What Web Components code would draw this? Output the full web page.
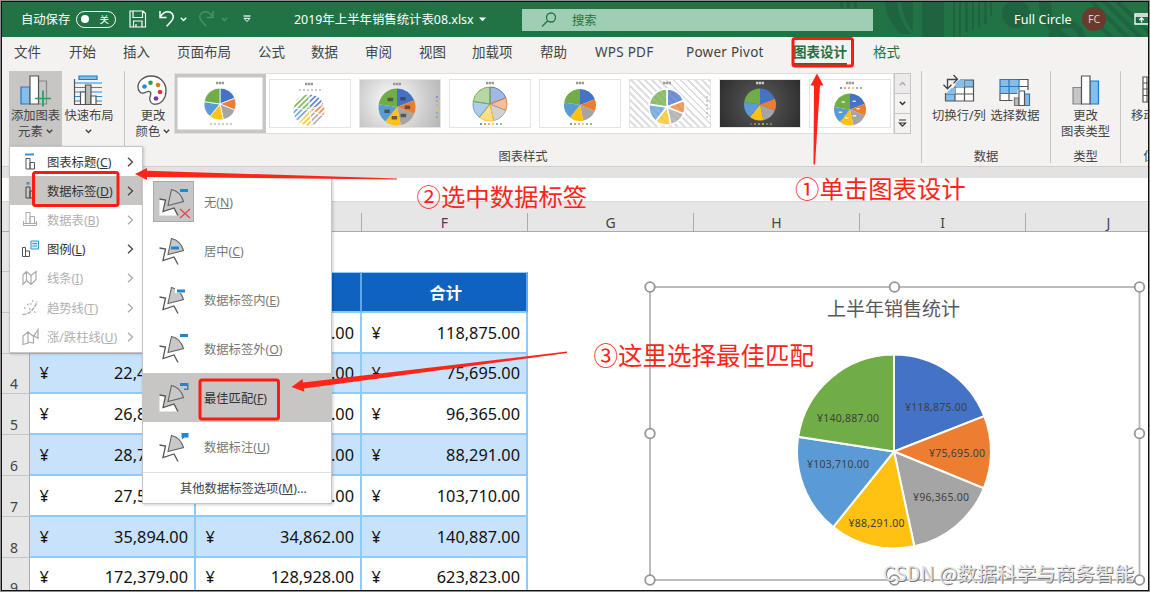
<!DOCTYPE html>
<html lang="zh-CN">
<head>
<meta charset="utf-8">
<title>2019年上半年销售统计表08.xlsx</title>
<style>
    html, body { margin: 0; padding: 0; }
    body {
        width: 1150px; height: 592px; overflow: hidden; background: #8e8e8e;
        font-family: "Noto Sans", "Noto Sans CJK SC", sans-serif;
        color: #444;
    }
</style>
</head>
<body>
<excel-app></excel-app>

<script>
const COLORS = ['#4472c4', '#ed7d31', '#a5a5a5', '#ffc112', '#5b9bd5', '#70ad47'];
const TOTALS = [118875, 75695, 96365, 88291, 103710, 140887];

const ICONS = {
    save: `<svg width="18" height="18" fill="none" stroke="#fff" stroke-width="1.2"><path d="M1 1h13l2.5 2.500v13.500h-15.500zM4 1v6.500h9.500v-6.500M4.500 17v-6h8.500v6M7 17v-3"/></svg>`,
    undo: `<svg width="18" height="18" fill="none" stroke="#fff" stroke-width="1.5"><path d="M2 1v6.500h6.500M2.200 7c2-3.500 4.500-5.200 7.500-5.200 4 0 6.300 3 5.300 6.500-.7 2.500-3.500 5-6.500 8"/></svg>`,
    redo: `<svg width="18" height="18" fill="none" stroke="#4a8f69" stroke-width="1.400"><path d="M15 1v6.500h-6.500M14.800 7c-2-3.500-4.500-5.200-7.500-5.200-4 0-6.300 3-5.300 6.500.7 2.500 3.500 5 6.500 8"/></svg>`,
    caret: `<svg width="7" height="5" fill="none" stroke="currentColor" stroke-width="1.500"><path d="M.8.8l2.700 2.700 2.700-2.700"/></svg>`,
    customize: `<svg width="8" height="8"><path d="M.5 1h7" stroke="#fff" stroke-width="1.200"/><path d="M1 3.300h6l-3 3.200z" fill="none" stroke="#fff"/></svg>`,
    triangle: `<svg width="7" height="5"><path d="M0 .5h7l-3.500 3.700z" fill="#fff"/></svg>`,
    search: `<svg width="16" height="16" fill="none" stroke="#217346" stroke-width="1.300"><circle cx="10" cy="5.500" r="4.500"/><path d="M6.800 8.800L1 14.500"/></svg>`,
    display: `<svg width="20" height="12" fill="none" stroke="#fff" stroke-width="1.300"><path d="M1 1h18v10h-18zM1 3h18M7.500 9.500v-4.500M5.300 7l2.200-2.200 2.200 2.200"/></svg>`,
    addElement: `<svg width="32" height="32" stroke-width="1.200"><path d="M1 12h9v17h-9z" fill="#83beec" stroke="#2579c0"/><path d="M18.500 6h8v23h-8z" fill="#c6c6c6" stroke="#888"/><path d="M10 1h8.500v28h-8.500z" fill="#fff" stroke="#555"/><path d="M15 23.500h16M23 15.500v16" stroke="#21a35c" stroke-width="1.700"/></svg>`,
    quickLayout: `<svg width="32" height="32" stroke-width="1.200" fill="none"><path d="M6 1h18v3.500h-18z" fill="#83beec" stroke="#2579c0"/><path d="M2 8h27M2 12.500h27M2 17h27M2 21.500h27M2 26h27" stroke="#2b8ad6"/><path d="M1.500 4v25.500h27.500" stroke="#555"/><path d="M7.500 17h5v12.500h-5z" fill="#fff" stroke="#555"/><path d="M12.500 10h5.500v19.500h-5.500z" fill="#bbb" stroke="#555"/><path d="M18 21h5v8.500h-5z" fill="#fff" stroke="#555"/></svg>`,
    palette: `<svg width="32" height="32"><path d="M14 1C7 1 1 6 1 12c0 4 2.500 6.500 5.500 6 3-.6 4.500-2.600 6.500-1.300 2.300 1.600-.3 4-.3 7 0 3.500 2.500 5.800 6 5.500 6-.5 10.300-6 10.300-13.500C29 7.500 23 1 14 1z" fill="#fff" stroke="#555" stroke-width="1.300"/><circle cx="7.500" cy="11.500" r="2.300" fill="#2b88d8"/><circle cx="13.500" cy="7.800" r="2.300" fill="#2e9f4e"/><circle cx="21" cy="10" r="2.300" fill="#e07b14"/><circle cx="23" cy="17" r="2.300" fill="#e83030"/><circle cx="19" cy="23.500" r="2.300" fill="#8a2da8"/></svg>`,
    switchRows: `<svg width="32" height="30" stroke-width="1.200"><path d="M2.500 5h28v21h-28z" fill="#fff"/><path d="M12 5h18.500v7h-18.500zM2.500 17h9.500v9h-9.500z" fill="#83beec"/><path d="M2.500 12h28M2.500 19h28M12 5v21M21.500 5v21M2.500 5h28v21h-28z" fill="none" stroke="#555"/><path d="M0 0h17l1 3-5 7-8 8h-5z" fill="#f3f2f1"/><path d="M12.500 12v-4l3.500-3h5.500v7zM2.500 19l6-6h3.500v6z" fill="#83beec"/><path d="M4.500 13.500v-9h10M10.500 0l4 4.200-4 4.200M.5 9.800l4 4 4-4" fill="none" stroke="#444" stroke-width="1.300"/></svg>`,
    selectData: `<svg width="32" height="30" stroke-width="1.200"><path d="M1 4.500h28v21h-28z" fill="#fff"/><path d="M1 4.500h19v14h-19z" fill="#83beec"/><path d="M20 4.500h9v21h-28v-7M20 11.500h9M10 18.500v7" fill="none" stroke="#555"/><path d="M1 11.500h19M1 18.500h19M10 4.500v14M1 4.500h19v14h-19z" fill="none" stroke="#2579c0"/><path d="M13.500 21h5v-6h13v16h-18z" fill="#f3f2f1"/><path d="M15.500 23h4.500v7.500h-4.500z" fill="#bbb" stroke="#777"/><path d="M25.500 19h5v11.500h-5z" fill="#83beec" stroke="#2579c0"/><path d="M20 16h5.500v14.500h-5.500z" fill="#fff" stroke="#555"/></svg>`,
    chartType: `<svg width="28" height="32" stroke-width="1.200"><path d="M1 12.500h8.500v16.500h-8.500z" fill="#c6c6c6" stroke="#888"/><path d="M18 6h8.500v23h-8.500z" fill="#83beec" stroke="#2579c0"/><path d="M9.500 1h8.500v28h-8.500z" fill="#fff" stroke="#555"/></svg>`,
    moveChart: `<svg width="28" height="30" stroke-width="1.200"><path d="M1 2h26v25h-26zM1 8h26M1 14h26M1 20.500h26M5 2v25" fill="#fff" stroke="#555"/></svg>`,
    title: `<svg width="18" height="18" fill="none" stroke="#555"><path d="M3 .5h9v2h-9z" fill="#2f97dc" stroke="none"/><path d="M4 5.500h4v10.500h-4zM8 9.500h4.500v6.500h-4.500z"/></svg>`,
    labels: `<svg width="18" height="18" fill="none" stroke="#444"><path d="M4.500 0h3v2.500h-3z" fill="#2f97dc" stroke="none"/><path d="M4 5h4v11h-4zM8 9h4.500v7h-4.500z"/></svg>`,
    table: `<svg width="18" height="18" fill="none" stroke="#aaa"><path d="M4 1.500h4v11h-4zM8 5.500h4.500v7h-4.500zM1.500 10v4.500h13v-4.500M1.500 12.500h13"/></svg>`,
    legend: `<svg width="18" height="18" fill="none" stroke="#555"><path d="M.5 7.500h3v9h-3zM3.500 11h4v5.500h-4z"/><path d="M9 1h7.500v8h-7.500z" fill="#d6ecfb" stroke="#2f97dc"/><path d="M10.500 3.500h4.500M10.500 6h4.500" stroke="#2f97dc"/></svg>`,
    lines: `<svg width="18" height="18" fill="none" stroke="#aaa" stroke-width="1.200"><path d="M1 6l3.500-3.500 4.500 4 5-4v8l-5 5-4.500-4-3.500 4zM4.500 2.500v9M9 6.500v9"/></svg>`,
    trend: `<svg width="18" height="18" fill="none" stroke="#aaa" stroke-width="1.400"><path d="M.5 15.500c8 0 12-6 14.500-13" stroke-dasharray="4 1"/><path d="M2 9h1.500M5 5.500h1.500M8 5h1.500M10 2h1.500M7 10h1.500M12 13h1.500"/></svg>`,
    bars: `<svg width="18" height="18" fill="none" stroke="#aaa" stroke-width="1.200"><path d="M1 8l5-4v11l-5 1.500zM6 4l5.500 4.500v6.500l-5.500-1M11.500 8.500l4.500-7v9l-4.500-3z"/></svg>`,
};

// Pie slices starting at 12 o'clock, clockwise
function pieSlices(cx, cy, r, attrs) {
    const sum = TOTALS.reduce((a, b) => a + b, 0);
    let angle = -Math.PI / 2;
    return TOTALS.map((value, i) => {
        const next = angle + value / sum * Math.PI * 2;
        const p = (a) => `${(cx + r * Math.cos(a)).toFixed(2)} ${(cy + r * Math.sin(a)).toFixed(2)}`;
        const d = `M${cx} ${cy}L${p(angle)}A${r} ${r} 0 0 1 ${p(next)}z`;
        angle = next;
        return `<path d="${d}" ${attrs(COLORS[i], i)}/>`;
    }).join('');
}

function define(name, render) {
    customElements.define(name, class extends HTMLElement {
        constructor() {
            super();
            this.attachShadow({ mode: 'open' });
        }
        connectedCallback() {
            this.shadowRoot.innerHTML = render(this);
        }
    });
}

define('ui-icon', (el) => `
    <style>:host { display: inline-flex; flex: none; } svg { display: block; overflow: visible; }</style>
    ${ICONS[el.getAttribute('name')]}
`);

define('title-bar', () => `
    <style>
        :host { display: block; position: relative; height: 35px; background: #217346; color: #fff; overflow: hidden; font-size: 12.300px; }
        .art { position: absolute; left: 818px; top: 0; }
        .bar { position: relative; display: flex; align-items: center; height: 34px; padding-left: 19px; white-space: nowrap; }
        .bar > * { flex: none; }
        .auto { width: 55px; }
        .switch { display: flex; align-items: center; justify-content: space-between; box-sizing: border-box; width: 40px; height: 17px; border: 1px solid #fff; border-radius: 9px; padding: 0 6px 0 4px; margin-right: 13px; font-size: 9.500px; }
        .dot { width: 8px; height: 8px; border-radius: 50%; background: #fff; }
        .name { width: 185px; font-size: 12.400px; }
        .search { display: flex; align-items: center; box-sizing: border-box; width: 351px; height: 22px; background: #a0ceb4; color: #217346; padding-left: 19px; gap: 15px; margin: 1px 141px 0 36px; }
        .user { width: 68px; font-size: 12.600px; letter-spacing: .1px; }
        .avatar { width: 24px; height: 24px; border-radius: 50%; background: #693a2e; color: #e6cfc7; text-align: center; line-height: 24px; font-size: 10.500px; margin-right: 28px; }
    </style>
    <svg class="art" width="330" height="35" fill="#1e6440">
        <path d="M20 0h3v6h-3zM27 0h3v6h-3zM34 0h3v6h-3zM65 0h12q2 20 14 32h-10q-14-12-16-32zM81 0h12v30q-10-12-12-30zM102 0h22v35h-22zM133 0h2v35h-2zM139 0h2v35h-2zM145 0h3v30h-3zM152 0h2v28h-2zM158 0h2v26h-2zM164 0h3v22h-3zM170 0h2v14h-2z"/>
        <circle cx="196" cy="12" r="14"/><path d="M219 0h12q0 26 20 35h-12q-20-11-20-35z"/>
        <circle cx="247" cy="37" r="15" fill="none" stroke="#1e6440" stroke-width="7"/>
        <path d="M270 0h5l35 35h-6zM282 0h6l35 35h-6zM295 0h6l30 30v5zM273 14l21 21h-6l-15-15z"/>
    </svg>
    <div class="bar">
        <span class="auto">自动保存</span>
        <span class="switch"><span class="dot"></span>关</span>
        <ui-icon name="save" style="width: 29px"></ui-icon>
        <ui-icon name="undo" style="width: 22px"></ui-icon>
        <ui-icon name="caret" style="width: 18px"></ui-icon>
        <ui-icon name="redo" style="width: 23px"></ui-icon>
        <ui-icon name="caret" style="width: 22px; color: #4a8f69"></ui-icon>
        <ui-icon name="customize" style="width: 51px"></ui-icon>
        <span class="name">2019年上半年销售统计表08.xlsx</span>
        <ui-icon name="triangle"></ui-icon>
        <span class="search"><ui-icon name="search"></ui-icon>搜索</span>
        <span class="user">Full Circle</span>
        <span class="avatar">FC</span>
        <ui-icon name="display"></ui-icon>
    </div>
`);

const TABS = [['文件', 55], ['开始', 54], ['插入', 54], ['页面布局', 81], ['公式', 53], ['数据', 54], ['审阅', 54], ['视图', 53],
    ['加载项', 68], ['帮助', 55], ['WPS PDF', 91], ['Power Pivot', 107], ['图表设计', 80], ['格式', 60]];

define('ribbon-tabs', () => `
    <style>
        :host { display: flex; height: 35px; padding-left: 12px; background: #f3f2f1; font-size: 13.500px; white-space: nowrap; }
        span { flex: none; line-height: 30px; }
        b { display: inline-block; height: 26px; border-bottom: 2px solid #217346; }
        .green { color: #217346; }
        .latin { letter-spacing: .25px; }
    </style>
    ${TABS.map(([text, width], i) => `<span class="${i > 11 ? 'green' : i > 9 ? 'latin' : ''}" style="width: ${width}px">${i === 12 ? `<b>${text}</b>` : text}</span>`).join('')}
`);

define('ribbon-button', (el) => `
    <style>
        :host { display: flex; flex-direction: column; align-items: center; flex: none; box-sizing: border-box; height: 76px; padding-top: 4px; white-space: nowrap; font-size: 12.300px; }
        :host([active]) { background: #c8c6c4; }
        .icon { height: 33px; }
        .label { line-height: 16px; text-align: center; }
    </style>
    <span class="icon"><ui-icon name="${el.getAttribute('icon')}"></ui-icon></span>
    <span class="label"><slot></slot></span>
`);

define('ribbon-group', (el) => `
    <style>
        :host { display: flex; flex-direction: column; flex: none; box-sizing: border-box; height: 92px; border-right: 1px solid #c8c6c4; font-size: 12.300px; }
        .body { display: flex; height: 77px; }
        .label { text-align: center; line-height: 20px; white-space: nowrap; }
    </style>
    <div class="body"><slot></slot></div>
    <div class="label">${el.getAttribute('label') || ''}</div>
`);

const THUMBS = {
    plain: { cx: 41, cy: 25, r: 16, title: 4, legend: 45 },
    striped: { cx: 40, cy: 31, r: 16, title: 5, legend: 11 },
    gradient: { cx: 38, cy: 28, r: 18.5, title: 5, side: true },
    outline: { cx: 41, cy: 25, r: 17, title: 4, legend: 45, dots: true },
    shaded: { cx: 41, cy: 26, r: 16, title: 4, legend: 45, dots: true },
    hatched: { cx: 38, cy: 28, r: 18, title: 4, side: true },
    dark: { cx: 41, cy: 25.5, r: 16, title: 4, legend: 45, dots: true },
    labelled: { cx: 41, cy: 30.5, r: 16, title: 4, legend: 9, dots: true },
};

define('chart-thumb', (el) => {
    const style = el.getAttribute('variant');
    const t = THUMBS[style];
    let bg = '#fff';
    if (style === 'gradient') bg = 'radial-gradient(circle at 40% 45%, #fff, #ccc 65%, #b5b5b5)';
    if (style === 'dark') bg = 'radial-gradient(circle, #5c5c5c, #2d2d2d)';
    if (style === 'hatched') bg = 'repeating-linear-gradient(45deg, #fff 0 3px, #dedede 3px 5px)';
    const slices = pieSlices(t.cx, t.cy, t.r, (c) => {
        if (style === 'outline') return `fill="${c}" fill-opacity=".5" stroke="${c}" stroke-width=".9"`;
        if (style === 'hatched') return `fill="${c}" fill-opacity=".75" stroke="#fff" stroke-width="1.500"`;
        if (style === 'striped') return `fill="${c}" fill-opacity=".85" stroke="#fff" stroke-width=".8"`;
        return `fill="${c}" stroke="#fff" stroke-width="${style === 'plain' ? .8 : 0}"`;
    });
    let marks = '';
    for (let i = 0; i < 6; i++) {
        const color = t.dots ? COLORS[i] : '#bbb';
        marks += t.side
            ? `<path d="M77 ${18 + i * 4}h2" stroke="${style === 'gradient' ? COLORS[i] : '#aaa'}" stroke-width="1.500" opacity=".7"/>`
            : `<path d="M${t.cx - 10 + i * 4} ${t.legend}h2" stroke="${color}" stroke-width="1.500"/>`;
    }
    if (style === 'gradient' || style === 'labelled') {
        const at = [[.28, -.42], [.5, 0], [.3, .4], [-.14, .52], [-.5, .2], [-.34, -.38]];
        marks += at.map(([x, y]) => `<rect x="${t.cx + x * t.r * 1.1 - 2.500}" y="${t.cy + y * t.r * 1.1 - 1.500}" width="${style === 'gradient' ? 5.5 : 3.5}" height="${style === 'gradient' ? 3.5 : 1.5}" rx=".5" fill="${style === 'gradient' ? '#444' : '#fff'}" opacity=".8"/>`).join('');
    }
    const stripes = style === 'striped'
        ? Array.from({ length: 9 }, (_, i) => `<path d="M${i * 5.2 + 3} 47.500l33-33" stroke="#fff" stroke-width="1.800"/>`).join('') : '';
    return `
        <style>
            :host { display: block; flex: none; box-sizing: border-box; width: 82px; height: 49px; background: ${bg}; border: 1px solid #e3e3e3; }
            :host([selected]) { box-shadow: 0 0 0 1.500px #fff, 0 0 0 5px #c6c6c6; border-color: #fff; }
            svg { display: block; margin: -1px; }
        </style>
        <svg width="82" height="49">${slices}${stripes}<path d="M${t.cx - 4} ${t.title}h8" stroke="${style === 'dark' ? '#ccc' : '#999'}" stroke-width="2.500" stroke-dasharray="2.500 .5"/>${marks}</svg>`;
});

define('style-gallery', () => `
    <style>
        :host { display: flex; box-sizing: border-box; width: 737px; height: 61px; margin-top: 2px; }
        .list { display: flex; align-items: center; gap: 8px; box-sizing: border-box; width: 720px; background: #fff; border: 1px solid #e1dfdd; padding-left: 4px; overflow: hidden; }
        .scroll { display: flex; flex-direction: column; width: 17px; }
        .scroll span { flex: 1; display: flex; align-items: center; justify-content: center; border: 1px solid #c8c6c4; margin-top: -1px; color: #333; }
        .scroll span:first-child { margin-top: 0; background: #eceaea; color: #aaa; }
    </style>
    <div class="list">
        ${Object.keys(THUMBS).map((v, i) => `<chart-thumb variant="${v}" ${i ? '' : 'selected'}></chart-thumb>`).join('')}
    </div>
    <div class="scroll">
        <span><ui-icon name="caret" style="transform: scaleY(-1)"></ui-icon></span>
        <span><ui-icon name="caret"></ui-icon></span>
        <span><svg width="9" height="9" fill="none" stroke="#333" stroke-width="1.200"><path d="M1 1h7M1.500 4h6l-3 3.200z"/></svg></span>
    </div>
`);

define('ribbon-panel', () => `
    <style>
        :host { display: flex; box-sizing: border-box; height: 96px; background: #f3f2f1; border-bottom: 1px solid #d2d0ce; overflow: hidden; padding-left: 7px; margin-top: -1px; position: relative; }
    </style>
    <ribbon-group style="width: 116px">
        <ribbon-button active icon="addElement" style="width: 53px">添加图表<br>元素 <ui-icon name="caret" style="vertical-align: 2px"></ui-icon></ribbon-button>
        <ribbon-button icon="quickLayout" style="width: 54px">快速布局<br><ui-icon name="caret" style="vertical-align: 2px"></ui-icon></ribbon-button>
    </ribbon-group>
    <ribbon-group label="图表样式" style="width: 797px">
        <ribbon-button icon="palette" style="width: 50px; margin-left: 3px; margin-right: -4px">更改<br>颜色 <ui-icon name="caret" style="vertical-align: 2px"></ui-icon></ribbon-button>
        <style-gallery></style-gallery>
    </ribbon-group>
    <ribbon-group label="数据" style="width: 129px">
        <ribbon-button icon="switchRows" style="width: 58px; margin-left: 8px">切换行/列</ribbon-button>
        <ribbon-button icon="selectData" style="width: 54px">选择数据</ribbon-button>
    </ribbon-group>
    <ribbon-group label="类型" style="width: 70px">
        <ribbon-button icon="chartType" style="width: 69px">更改<br>图表类型</ribbon-button>
    </ribbon-group>
    <ribbon-group label="位置" style="width: 70px; margin-right: -50px">
        <ribbon-button icon="moveChart" style="width: 69px">移动图表</ribbon-button>
    </ribbon-group>
`);

// Cells: [symbol, amount]; columns D and E run under the open menus, so only what shows is listed
const ROWS = [
    ['3', ['', ''], ['', '.00'], ['¥', '118,875.00']],
    ['4', ['¥', '22,4'], ['', '.00'], ['¥', '75,695.00']],
    ['5', ['¥', '26,8'], ['', '.00'], ['¥', '96,365.00']],
    ['6', ['¥', '28,7'], ['', '.00'], ['¥', '88,291.00']],
    ['7', ['¥', '27,5'], ['', '.00'], ['¥', '103,710.00']],
    ['8', ['¥', '35,894.00'], ['¥', '34,862.00'], ['¥', '140,887.00']],
    ['9', ['¥', '172,379.00'], ['¥', '128,928.00'], ['¥', '623,823.00']],
];

define('sheet-grid', () => `
    <style>
        :host { display: block; height: 424px; overflow: hidden; background: #fff; }
        .formula { box-sizing: border-box; height: 35px; border-top: 11px solid #e2e2e2; border-bottom: 1px solid #d8d8d8; }
        .cols { display: flex; box-sizing: border-box; height: 30px; background: #e6e6e6; border-bottom: 1px solid #ababab; padding-left: 28px; font-size: 14px; }
        .cols span { flex: none; box-sizing: border-box; width: 166px; padding-top: 12px; line-height: 18px; text-align: center; border-right: 1px solid; border-image: linear-gradient(transparent 40%, #ababab 40%) 1; }
        .row { display: flex; height: 40.800px; }
        .blank { height: 40px; }
        .num { flex: none; box-sizing: border-box; width: 28px; background: #e6e6e6; border-right: 1px solid #ababab; border-bottom: 1px solid #c6c6c6; display: flex; align-items: flex-end; justify-content: center; font-size: 14px; line-height: 18px; padding-right: 3px; }
        .cell { flex: none; box-sizing: border-box; width: 166px; display: flex; align-items: center; justify-content: space-between; padding: 1px 6px 0 9.500px; border-right: 2px solid #8ecbfb; border-bottom: 2px solid #8ecbfb; color: #111; font-size: 16.300px; }
        .cell:first-of-type + .cell { border-left: 1px solid #8ecbfb; }
        .band .cell { background: #c9e2fb; }
        .head .cell { background: #0f62bf; color: #fff; font-weight: bold; justify-content: center; border-top: 1px solid #8ecbfb; border-right-color: #5da7ea; }
        .cut { width: 74px; }
    </style>
    <div class="formula"></div>
    <div class="cols">${['D', 'E', 'F', 'G', 'H', 'I', 'J'].map((c, i) => `<span>${i < 2 ? '' : c}</span>`).join('')}</div>
    <div class="row blank"><span class="num"></span></div>
    <div class="row head"><span class="num"></span><span class="cell"></span><span class="cell"></span><span class="cell">合计</span></div>
    ${ROWS.map(([n, ...cells], i) => `<div class="row ${i % 2 ? 'band' : ''}"><span class="num">${i ? n : ''}</span>${cells.map(([s, v]) =>
        `<span class="cell"><span>${s}</span><span class="${v.length === 4 ? 'cut' : ''}">${v}</span></span>`).join('')}</div>`).join('')}
`);

define('pie-chart', () => {
    const labels = [['¥118,875.00', 936, 411, 62], ['¥75,695.00', 957, 456.5, 56], ['¥96,365.00', 941, 500.500, 56],
        ['¥88,291.00', 876.500, 527, 56], ['¥103,710.00', 838, 468, 62], ['¥140,887.00', 848, 422, 62]];
    const handles = [[650, 287], [894.500, 287], [1139.500, 287], [650, 433.500], [1139.500, 433.500], [650, 580], [894.500, 580], [1139.500, 580]];
    return `
        <style>
            :host { display: block; position: absolute; left: 640px; top: 277px; width: 508px; height: 313px; }
            svg { display: block; }
        </style>
        <svg width="508" height="313" viewBox="640 277 508 313">
            <rect x="650" y="287" width="489.500" height="293" fill="#fff" stroke="#b5b5b5" stroke-width="1.800"/>
            <text x="893.500" y="316" text-anchor="middle" font-size="19" fill="#595959">上半年销售统计</text>
            ${pieSlices(894, 451.5, 97, (c) => `fill="${c}" stroke="#fff" stroke-width="2"`)}
            ${labels.map(([t, x, y, w]) => `<text x="${x}" y="${y}" text-anchor="middle" font-size="10.500" textLength="${w}" fill="#404040">${t}</text>`).join('')}
            ${handles.map(([x, y]) => `<circle cx="${x}" cy="${y}" r="4.800" fill="#fff" stroke="#959595" stroke-width="1.800"/>`).join('')}
        </svg>`;
});

define('element-menu', () => {
    const items = [['title', '图表标题', 'C'], ['labels', '数据标签', 'D'], ['table', '数据表', 'B', 1], ['legend', '图例', 'L'],
        ['lines', '线条', 'I', 1], ['trend', '趋势线', 'T', 1], ['bars', '涨/跌柱线', 'U', 1]];
    return `
        <style>
            :host { display: block; position: absolute; left: 9px; top: 146px; box-sizing: border-box; width: 134px; height: 207px; background: #fff; border: 1px solid #c8c6c4; box-shadow: 1px 1px 3px #0003; font-size: 12.300px; }
            .item { display: flex; align-items: center; height: 29.200px; padding-left: 12px; white-space: nowrap; color: #333; }
            .item.on { background: #c8c6c4; }
            .item.off { color: #b0b0b0; }
            .text { flex: 1; margin-left: 7px; }
            .arrow { width: 15px; }
        </style>
        ${items.map(([icon, text, key, off], i) => `<div class="item ${off ? 'off' : ''} ${i === 1 ? 'on' : ''}">
            <ui-icon name="${icon}"></ui-icon><span class="text">${text}(<u>${key}</u>)</span>
            <svg class="arrow" width="8" height="10" fill="none" stroke="${off ? '#aaa' : '#444'}" stroke-width="1.300"><path d="M1 .8l4.500 4.200-4.500 4.200"/></svg></div>`).join('')}`;
});

define('label-icon', (el) => {
    const tag = {
        none: '<path d="M22 2h8v3h-8z"/><path d="M22 22l10 9M32 22l-10 9" stroke="#e8444a" stroke-width="1.300"/>',
        center: '<path d="M13 10.500h8v3h-8z"/>',
        inside: '<path d="M17 3h10v5h-10z" fill="#fff"/><path d="M19 4.500h8v3h-8z"/>',
        outside: '<path d="M22 0h8v3h-8z"/>',
        best: '<path d="M22 0h8.500v7h-4.500v-1.500h3v-2.500h-7z"/>',
        callout: '<path d="M23.500 0h7v4.500h-4l-2.500 2v-2h-.5z"/>',
    }[el.getAttribute('kind')];
    const backing = el.hasAttribute('backed') ? '<path d="M1.500 12l6 1-1.500 11 10-2 3 6.500h-17.500z" fill="#fff"/>' : '';
    return `
        <style>:host { display: flex; flex: none; } svg { overflow: visible; }</style>
        <svg width="34" height="32" fill="#1e88d2">
            ${backing}
            <path d="M1.500 12l6 1-2.500 11.500 11-3.500 4 7.500" fill="none" stroke="#555" stroke-width="1.300"/>
            <path d="M13.500 2.500q9 2 12 12l-15.500 4z" fill="#c8c8c8" stroke="#666" stroke-width="1.100"/>
            ${tag}
        </svg>`;
});

define('label-menu', () => {
    const items = [['none', '无', 'N'], ['center', '居中', 'C'], ['inside', '数据标签内', 'E'], ['outside', '数据标签外', 'O'], ['best', '最佳匹配', 'F'], ['callout', '数据标注', 'U']];
    return `
        <style>
            :host { display: block; position: absolute; left: 142px; top: 177px; box-sizing: border-box; width: 190px; height: 327px; background: #fff; border: 1px solid #c8c6c4; border-top: 0; box-shadow: 1px 1px 3px #0003; font-size: 12.300px; color: #777; }
            .item { display: flex; align-items: center; height: 49.100px; padding-left: 10px; white-space: nowrap; }
            .item.on { background: #c8c6c4; color: #333; }
            .icon { box-sizing: border-box; width: 41px; height: 41px; padding: 6px 5px 4px; margin-right: 10px; }
            .none { background: #c6c6c6; outline: 1px solid #aaa; outline-offset: -1px; }
            .more { border-top: 1px solid #e1dfdd; line-height: 31px; padding-left: 37px; color: #444; white-space: nowrap; }
        </style>
        ${items.map(([kind, text, key]) => `<div class="item ${kind === 'best' ? 'on' : ''}">
            <span class="icon ${kind}"><label-icon kind="${kind}" ${kind === 'none' || kind === 'best' ? 'backed' : ''}></label-icon></span>
            <span>${text}(<u>${key}</u>)</span></div>`).join('')}
        <div class="more">其他数据标签选项(<u>M</u>)...</div>`;
});

define('tutorial-notes', () => `
    <style>
        :host { display: block; position: absolute; left: 0; top: 0; font-family: "Noto Sans CJK SC", sans-serif; }
        svg { display: block; }
    </style>
    <svg width="1150" height="592" fill="#ff2418">
        <g fill="none" stroke="#ff1a12" stroke-width="3">
            <rect x="793" y="38.500" width="59.500" height="27.500" rx="2"/>
            <rect x="33.500" y="172.500" width="84.500" height="33" rx="2"/>
            <rect x="200" y="380" width="78.500" height="39" rx="2"/>
        </g>
        <path d="M817 73.500l6.500 12h-3.500l-5 79h-1.500l.5-79h-3.500z"/>
        <path d="M135 174l12-6v2.800l250 7.700v1l-250-2.500v3z"/>
        <path d="M291.500 387l11-8 .5 3.500 264-31v1.500l-263 35.500.3 3.300z"/>
        <text x="795" y="198" font-size="24.400">①单击图表设计</text>
        <text x="416.500" y="206" font-size="24.400">②选中数据标签</text>
        <text x="593.500" y="364.500" font-size="24.500">③这里选择最佳匹配</text>
        <text x="883" y="580.500" font-size="19.500" textLength="251" fill="#e4e4e4" style="text-shadow: 1px 1px 0 #777">CSDN @数据科学与商务智能</text>
    </svg>
`);

define('excel-app', () => `
    <style>
        :host { display: block; box-sizing: border-box; position: relative; width: 1150px; height: 592px; overflow: hidden; }
        .frame { display: flex; flex-direction: column; box-sizing: border-box; width: 1148px; height: 590px; margin: 1px 0 0 1px; border: 1px solid #111; overflow: hidden; }
        .frame > * { flex: none; }
    </style>
    <div class="frame">
        <title-bar></title-bar>
        <ribbon-tabs></ribbon-tabs>
        <ribbon-panel></ribbon-panel>
        <sheet-grid></sheet-grid>
    </div>
    <pie-chart></pie-chart>
    <element-menu></element-menu>
    <label-menu></label-menu>
    <tutorial-notes></tutorial-notes>
`);
</script>
</body>
</html>
